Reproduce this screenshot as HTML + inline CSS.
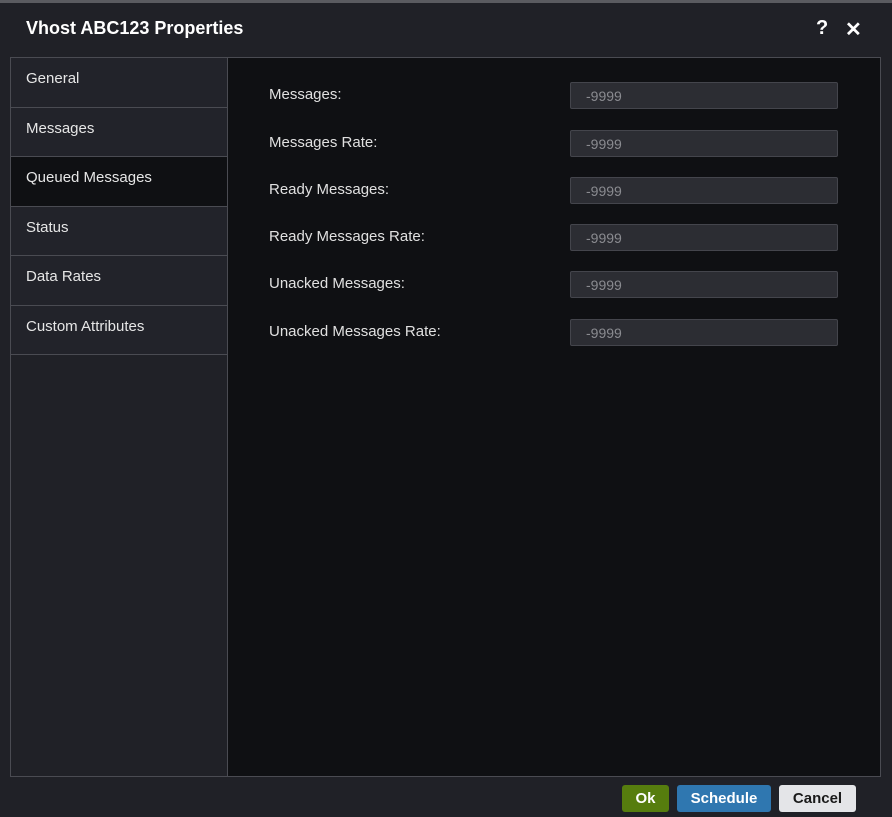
<!DOCTYPE html>
<html><head><style>
*{box-sizing:border-box;margin:0;padding:0}
body{width:892px;height:817px;background:#202127;font-family:"Liberation Sans",sans-serif;position:relative;overflow:hidden;color:#e6e6e6}
.top{position:absolute;left:0;top:0;width:892px;height:3px;background:#5a5b60}
.title{position:absolute;left:26px;top:18px;font-size:18px;font-weight:bold;color:#fff}
.ic{position:absolute;top:17px;font-size:20px;font-weight:bold;color:#fff}
.box{position:absolute;left:10px;top:57px;width:871px;height:720px;border:1px solid #4a4b52;background:#0f1013}
.side{position:absolute;left:0;top:0;width:217px;height:718px;border-right:1px solid #4a4b52;background:#202127}
.it{height:49.5px;border-bottom:1px solid #4a4b52;background:#22232a;padding:12px 15px;font-size:15px;color:#e6e6e6}
.it.sel{background:#0f1013}
.lab{position:absolute;left:258px;font-size:15px;color:#e0e0e0}
.inp{position:absolute;left:559px;width:268px;height:27px;border:1px solid #44454c;background:#2c2d33;border-radius:2px;color:#8a8b90;font-size:14px;padding:5px 15px}
.btn{position:absolute;top:785px;height:27px;border-radius:3px;font-size:15px;font-weight:bold;text-align:center;line-height:27px}
</style></head><body>
<div class="top"></div>
<div class="title">Vhost ABC123 Properties</div>
<div class="ic" style="left:816px">?</div>
<div class="ic" style="left:845px">✕</div>
<div class="box">
<div class="side">
<div class="it">General</div>
<div class="it">Messages</div>
<div class="it sel">Queued Messages</div>
<div class="it">Status</div>
<div class="it">Data Rates</div>
<div class="it">Custom Attributes</div>
</div>
<div class="lab" style="top:28px">Messages:</div><div class="inp" style="top:24px">-9999</div>
<div class="lab" style="top:76px">Messages Rate:</div><div class="inp" style="top:72px">-9999</div>
<div class="lab" style="top:123px">Ready Messages:</div><div class="inp" style="top:119px">-9999</div>
<div class="lab" style="top:170px">Ready Messages Rate:</div><div class="inp" style="top:166px">-9999</div>
<div class="lab" style="top:217px">Unacked Messages:</div><div class="inp" style="top:213px">-9999</div>
<div class="lab" style="top:265px">Unacked Messages Rate:</div><div class="inp" style="top:261px">-9999</div>
</div>
<div class="btn" style="left:622px;width:47px;background:#567d0e;color:#fff">Ok</div>
<div class="btn" style="left:677px;width:94px;background:#2f77b0;color:#fff">Schedule</div>
<div class="btn" style="left:779px;width:77px;background:#e4e5e8;color:#1a1a1a">Cancel</div>
</body></html>
